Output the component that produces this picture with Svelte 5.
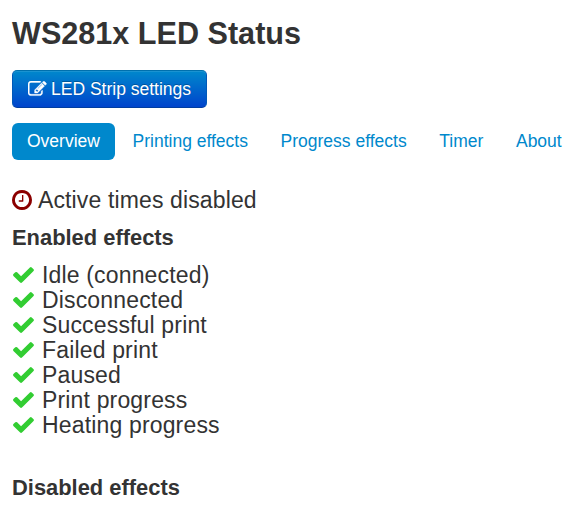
<script>
  const tabs = [
    { label: 'Overview', cls: 'active' },
    { label: 'Printing effects', cls: 'printing' },
    { label: 'Progress effects', cls: 'progress' },
    { label: 'Timer', cls: 'timer' },
    { label: 'About', cls: 'about' }
  ];
  const enabled = ['Idle (connected)', 'Disconnected', 'Successful print', 'Failed print', 'Paused', 'Print progress', 'Heating progress'];
</script>

<main>
  <h1>WS281x LED Status</h1>
  <button type="button">
    <svg class="edit" viewBox="0 128 1792 1536"><path d="M888 1184l116-116-152-152-116 116v56h96v96h56zm440-720q-16-16-33 1l-350 350q-17 17-1 33t33-1l350-350q17-17 1-33zm80 594v190q0 119-84.5 203.5t-203.5 84.5h-832q-119 0-203.5-84.5t-84.5-203.5v-832q0-119 84.5-203.5t203.5-84.5h832q63 0 117 25 15 7 18 23 3 17-9 29l-49 49q-14 14-32 8-23-6-45-6h-832q-66 0-113 47t-47 113v832q0 66 47 113t113 47h832q66 0 113-47t47-113v-126q0-13 9-22l64-64q15-15 35-7t20 29zm-96-738l288 288-672 672h-288v-288zm444 132l-92 92-288-288 92-92q28-28 68-28t68 28l152 152q28 28 28 68t-28 68z" /></svg>
    <span>LED Strip settings</span>
  </button>
  <nav>
    {#each tabs as tab}
      <a class={tab.cls} href="#{tab.cls}">{tab.label}</a>
    {/each}
  </nav>
  <p class="status">
    <svg class="clock" viewBox="128 128 1536 1536"><path d="M1000 544v448q0 14-9 23t-23 9h-296q-14 0-23-9t-9-23v-44q0-14 9-23t23-9h224v-372q0-14 9-23t23-9h40q14 0 23 9t9 23zm440 352q0-148-73-273t-198-198-273-73-273 73-198 198-73 273 73 273 198 198 273 73 273-73 198-198 73-273zm224 0q0 209-103 385.5t-279.5 279.5-385.5 103-385.5-103-279.5-279.5-103-385.5 103-385.5 279.5-279.5 385.5-103 385.5 103 279.5 279.5 103 385.5z" /></svg>
    <span>Active times disabled</span>
  </p>
  <h2>Enabled effects</h2>
  <ul>
    {#each enabled as effect}
      <li>
        <svg class="check" viewBox="121 334 1550 1188"><path d="M1671 566q0 40-28 68l-724 724-136 136q-28 28-68 28t-68-28l-136-136-362-362q-28-28-28-68t28-68l136-136q28-28 68-28t68 28l294 295 656-657q28-28 68-28t68 28l136 136q28 28 28 68z" /></svg>
        <span>{effect}</span>
      </li>
    {/each}
  </ul>
  <h2 class="disabled">Disabled effects</h2>
</main>

<style>
  :global(body) {
    background: #fff;
  }
  main {
    box-sizing: border-box;
    height: 516px;
    padding: 8px 12px 0;
    overflow: hidden;
    color: #333;
    font-family: "Liberation Sans", Arial, sans-serif;
    font-size: 17.5px;
    white-space: nowrap;
  }
  svg {
    display: block;
    flex: none;
    fill: currentColor;
  }
  h1 {
    margin: 0 0 12px;
    font-size: 30.6px;
    line-height: 50px;
  }
  button {
    box-sizing: border-box;
    display: flex;
    align-items: center;
    width: 195px;
    height: 38px;
    margin: 0 0 15px;
    padding: 0 0 0 15px;
    border: 1px solid;
    border-color: #0070ad #0058b8 #003da0;
    border-radius: 5px;
    background: linear-gradient(#0088cc, #0044cc);
    box-shadow: inset 0 1px 0 rgba(255, 255, 255, 0.1);
    color: #fff;
    font: inherit;
    text-shadow: 0 -1px 0 rgba(0, 0, 0, 0.25);
  }
  .edit {
    width: 18.5px;
    height: 16px;
    margin-right: 4.5px;
    stroke: currentColor;
    stroke-width: 36;
  }
  nav {
    display: flex;
    height: 37px;
  }
  nav a {
    margin-right: 2.6px;
    padding: 0 15px;
    border-radius: 6px;
    color: #0088cc;
    line-height: 36px;
    text-decoration: none;
  }
  nav .active {
    background: #0088cc;
    color: #fff;
  }
  .status {
    display: flex;
    align-items: center;
    height: 25px;
    margin: 27px 0 0;
    font-size: 23px;
    letter-spacing: 0.13px;
  }
  .status span,
  li span {
    padding-top: 2px;
  }
  .clock {
    width: 20px;
    height: 20px;
    margin-right: 6px;
    color: #8b0000;
  }
  h2 {
    margin: 13px 0 12px;
    font-size: 21.9px;
    line-height: 25px;
  }
  ul {
    margin: 0;
    padding: 0;
    list-style: none;
    font-size: 23px;
    letter-spacing: 0.16px;
  }
  li {
    display: flex;
    align-items: center;
    height: 25px;
    padding-left: 1px;
  }
  .check {
    width: 21px;
    height: 16px;
    margin-right: 8px;
    color: #32cd32;
  }
  .disabled {
    margin-top: 38px;
  }
</style>
